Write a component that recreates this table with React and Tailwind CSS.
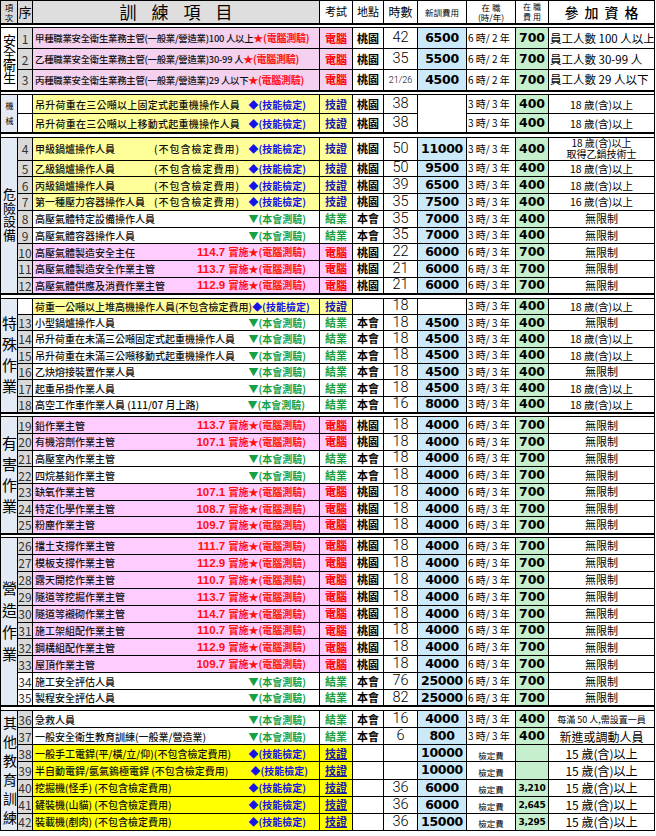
import React from "react";

const B = "border border-black";
const BP = "border border-black p-0";
const LAV = "bg-[#f3d1ef]";
const PINK = "bg-[#ffccff]";
const PY = "bg-[#ffff99]";
const BY = "bg-[#ffff00]";
const WH = "bg-white";
const VERT = "[writing-mode:vertical-rl] [text-orientation:upright] mx-auto";

const pc = (n, name, v, extra = {}) => ({
  n, name, tag: "pc", v, bg: PINK, ex: "電腦", pl: "桃園", hr: "18", fee: "4000",
  cy: "6 時/ 3 年", co: "700", q: "無限制", ...extra,
});
const club = (n, name, extra = {}) => ({
  n, name, tag: "club", bg: WH, ex: "結業", pl: "本會", hr: "18", fee: "4000",
  cy: "6 時/ 3 年", co: "700", q: "無限制", ...extra,
});
const skill = (n, name, extra = {}) => ({
  n, name, tag: "skill", bg: PY, ex: "技證", pl: "桃園", hr: "", fee: "",
  cy: "3 時/ 3 年", co: "400", q: "18 歲(含)以上", ...extra,
});

const sections = [
  {
    label: "安全衛生", lab: "text-[13px] tracking-[-0.5px] pt-[1px]", labBg: WH, h: "h-[21px]",
    rows: [
      pc(1, "甲種職業安全衛生業務主管(一般業/營造業)100 人以上", "", { inline: true, bg: LAV, hr: "42", fee: "6500", cy: "6 時/ 2 年", q: "員工人數 100 人以上", qc: "left" }),
      pc(2, "乙種職業安全衛生業務主管(一般業/營造業)30-99 人", "", { inline: true, bg: LAV, hr: "35", fee: "5500", cy: "6 時/ 2 年", q: "員工人數 30-99 人", qc: "left" }),
      pc(3, "丙種職業安全衛生業務主管(一般業/營造業)29 人以下", "", { inline: true, bg: LAV, hr: "21/26", fee: "4500", cy: "6 時/ 2 年", q: "員工人數 29 人以下", qc: "left" }),
    ],
  },
  {
    label: "機械", lab: "text-[8px] tracking-[7px] pt-[7px]", labBg: "bg-[#e4ebf5]", h: "h-[18px]",
    rows: [
      skill("", "吊升荷重在三公噸以上固定式起重機操作人員", { hr: "38", feeSpan: 2, nc: "tracking-[0.25px]" }),
      skill("", "吊升荷重在三公噸以上移動式起重機操作人員", { hr: "38", feeSkip: true, nc: "tracking-[0.25px]" }),
    ],
  },
  {
    label: "危險設備", lab: "text-[13px] tracking-[0.5px]", labBg: "bg-[#e4ebf5]", h: "h-[16.75px]",
    rows: [
      skill(4, "甲級鍋爐操作人員", { mid: true, hr: "50", fee: "11000", q: "18 歲(含)以上\n取得乙鍋技術士", h: "h-[23px]" }),
      skill(5, "乙級鍋爐操作人員", { mid: true, hr: "50", fee: "9500" }),
      skill(6, "丙級鍋爐操作人員", { mid: true, hr: "39", fee: "6500" }),
      skill(7, "第一種壓力容器操作人員", { mid: true, hr: "35", fee: "7500", q: "16 歲(含)以上" }),
      club(8, "高壓氣體特定設備操作人員", { hr: "35", fee: "7000", cy: "3 時/ 3 年", co: "400" }),
      club(9, "高壓氣體容器操作人員", { hr: "35", fee: "7000", cy: "3 時/ 3 年", co: "400" }),
      pc(10, "高壓氣體製造安全主任", "114.7", { hr: "22", fee: "6000" }),
      pc(11, "高壓氣體製造安全作業主管", "113.7", { hr: "21", fee: "6000" }),
      pc(12, "高壓氣體供應及消費作業主管", "112.9", { hr: "21", fee: "6000" }),
    ],
  },
  {
    label: "特殊作業", lab: "text-[15px] tracking-[6px] pt-[6px]", labBg: "bg-[#e4ebf5]", h: "h-[16.4px]",
    rows: [
      skill("", "荷重一公噸以上堆高機操作人員(不包含檢定費用)", { pl: "", hr: "18", pr: "pr-[11px]" }),
      club(13, "小型鍋爐操作人員", { fee: "4500", cy: "3 時/ 3 年", co: "400" }),
      club(14, "吊升荷重在未滿三公噸固定式起重機操作人員", { fee: "4500", cy: "3 時/ 3 年", co: "400", q: "18 歲(含)以上" }),
      club(15, "吊升荷重在未滿三公噸移動式起重機操作人員", { fee: "4500", cy: "3 時/ 3 年", co: "400", q: "18 歲(含)以上" }),
      club(16, "乙炔熔接裝置作業人員", { fee: "4500", cy: "3 時/ 3 年", co: "400" }),
      club(17, "起重吊掛作業人員", { fee: "4500", cy: "3 時/ 3 年", co: "400", q: "18 歲(含)以上" }),
      club(18, "高空工作車作業人員 (111/07 月上路)", { hr: "16", fee: "8000", cy: "3 時/ 3 年", co: "400", q: "18 歲(含)以上", pr: "pr-[14px]" }),
    ],
  },
  {
    label: "有害作業", lab: "text-[15px] tracking-[6px] pt-[6px]", labBg: "bg-[#e4ebf5]", h: "h-[16.7px]",
    rows: [
      pc(19, "鉛作業主管", "113.7"),
      pc(20, "有機溶劑作業主管", "107.1"),
      club(21, "高壓室內作業主管"),
      club(22, "四烷基鉛作業主管"),
      pc(23, "缺氧作業主管", "107.1"),
      pc(24, "特定化學作業主管", "108.7"),
      pc(25, "粉塵作業主管", "109.7"),
    ],
  },
  {
    label: "營造作業", lab: "text-[15px] tracking-[7px] pt-[7px]", labBg: "bg-[#e4ebf5]", h: "h-[16.9px]",
    rows: [
      pc(26, "擋土支撐作業主管", "111.7"),
      pc(27, "模板支撐作業主管", "112.9"),
      pc(28, "露天開挖作業主管", "110.7"),
      pc(29, "隧道等挖掘作業主管", "113.7"),
      pc(30, "隧道等襯砌作業主管", "114.7"),
      pc(31, "施工架組配作業主管", "110.7"),
      pc(32, "鋼構組配作業主管", "112.9"),
      pc(33, "屋頂作業主管", "109.7"),
      club(34, "施工安全評估人員", { hr: "76", fee: "25000", nbg: WH }),
      club(35, "製程安全評估人員", { hr: "82", fee: "25000", nbg: WH }),
    ],
  },
  {
    label: "其他教育訓練", lab: "text-[14px] tracking-[5px] pt-[5px]", labBg: "bg-[#e4ebf5]", h: "h-[17.1px]",
    rows: [
      club(36, "急救人員", { hr: "16", cy: "3 時/ 3 年", co: "400", q: "每滿 50 人,需設置一員", qc: "text-[9px]" }),
      club(37, "一般安全衛生教育訓練(一般業/營造業)", { hr: "6", fee: "800", cy: "3 時/ 3 年", co: "400", q: "新進或調動人員", qc: "text-[12px]" }),
      skill(38, "一般手工電銲(平/橫/立/仰)(不包含檢定費用)", { bg: BY, pl: "", fee: "10000", cy: "檢定費", co: "", q: "15 歲(含)以上", qc: "text-[12px]", u: true }),
      skill(39, "半自動電銲/氬氣鎢極電銲 (不包含檢定費用)", { bg: BY, pl: "", fee: "10000", cy: "檢定費", co: "", q: "15 歲(含)以上", qc: "text-[12px]", u: true, pr: "pr-[11px]" }),
      skill(40, "挖掘機(怪手) (不包含檢定費用)", { bg: BY, pl: "", hr: "36", fee: "6000", cy: "檢定費", co: "3,210", q: "15 歲(含)以上", qc: "text-[12px]", u: true }),
      skill(41, "鏟裝機(山貓) (不包含檢定費用)", { bg: BY, pl: "", hr: "36", fee: "6000", cy: "檢定費", co: "2,645", q: "15 歲(含)以上", qc: "text-[12px]", u: true }),
      skill(42, "裝載機(剷肉) (不包含檢定費用)", { bg: BY, pl: "", hr: "36", fee: "15000", cy: "檢定費", co: "3,295", q: "15 歲(含)以上", qc: "text-[12px]", u: true }),
    ],
  },
];

const EXC = {
  電腦: "text-[#ff0000]",
  技證: "text-[#1c1ca8]",
  結業: "text-[#14a044]",
};

function Tag({ r }) {
  if (r.tag === "pc")
    return (
      <span className="shrink-0 text-[#ff1010] font-bold text-[10px]">
        {r.v && <span className="font-['Liberation_Sans'] text-[11.5px]">{r.v} </span>}
        {r.v && "實施"}★(電腦測驗)
      </span>
    );
  if (r.tag === "skill") return <span className="shrink-0 text-[#1414e6] font-bold text-[10px]">◆(技能檢定)</span>;
  return <span className="shrink-0 text-[#14a044] font-bold text-[10px]">▼(本會測驗)</span>;
}

function Item({ r }) {
  if (r.inline)
    return (
      <td className={`${B} ${r.bg} py-0 px-[2px]`}>
        <div className="whitespace-nowrap text-[9.4px] leading-[13px] tracking-[-0.25px] text-[#111] font-medium">
          {r.name}
          <Tag r={r} />
        </div>
      </td>
    );
  return (
    <td className={`${B} ${r.bg} py-0 pl-[2px] ${r.pr || "pr-[13px]"}`}>
      <div className="flex items-center whitespace-nowrap text-[10px] leading-[13px] text-[#111] font-medium">
        <span className={`${r.mid ? "w-[119px] shrink-0" : ""} ${r.nc || ""}`}>{r.name}</span>
        {r.mid && <span className="tracking-[1px]">(不包含檢定費用)</span>}
        <span className="flex-1" />
        <Tag r={r} />
      </div>
    </td>
  );
}

function Qual({ r }) {
  if (r.q.includes("\n"))
    return <td className={`${BP} text-center text-[10px] leading-[10.5px] whitespace-pre-line`}>{r.q}</td>;
  let cls = "text-center text-[10.5px]";
  if (r.qc === "left") cls = "text-left pl-[1px] text-[11.5px]";
  else if (r.qc) cls = `text-center ${r.qc}`;
  else if (r.q === "無限制") cls = "text-center text-[11px]";
  return <td className={`${BP} ${cls} whitespace-nowrap leading-[13px]`}>{r.q}</td>;
}

function Row({ r, first, sec }) {
  return (
    <tr className={r.h || sec.h}>
      {first && (
        <td rowSpan={sec.rows.length} className={`${BP} ${sec.labBg}`}>
          <div className={`${VERT} ${sec.lab} leading-[17px]`}>{sec.label}</div>
        </td>
      )}
      <td className={`${BP} ${r.n === "" ? WH : r.nbg || "bg-[#d9d9d9]"} text-center text-[12px] leading-[13px] text-[#333]`}>{r.n}</td>
      <Item r={r} />
      <td className={`${BP} ${r.bg} text-center text-[11px] font-bold leading-[13px] ${EXC[r.ex]} ${r.u ? "underline" : ""}`}>{r.ex}</td>
      <td className={`${BP} bg-white text-center text-[11px] font-bold leading-[13px]`}>{r.pl}</td>
      <td className={`${BP} bg-white text-center leading-[14px] font-['Roboto'] font-light ${r.hr.length > 3 ? "text-[9px]" : "text-[14.5px]"}`}>{r.hr}</td>
      {!r.feeSkip && (
        <td
          rowSpan={r.feeSpan || 1}
          className={`${BP} ${r.fee ? "bg-[#cce9f9]" : "bg-white"} text-center font-['DejaVu_Sans'] font-bold text-[12.5px] leading-[14px] tracking-[-0.3px]`}
        >
          {r.fee}
        </td>
      )}
      <td className={`${BP} bg-white leading-[12px] whitespace-nowrap ${r.cy === "檢定費" ? "text-center text-[8.5px] pt-[3px]" : "text-left pl-[1px] text-[10px]"}`}>{r.cy}</td>
      <td className={`${BP} bg-[#c6efce] text-center font-['DejaVu_Sans'] font-bold leading-[14px] ${r.co.length > 3 ? "text-[9px] tracking-[-0.3px]" : "text-[12.5px]"}`}>{r.co}</td>
      <Qual r={r} />
    </tr>
  );
}

function Sep() {
  return (
    <tr className="h-[4px]">
      <td colSpan={10} className="p-0 border-t-2 border-b border-x border-black bg-white" />
    </tr>
  );
}

export default function App() {
  return (
    <div className="w-[656px] h-[836px] bg-white font-['Noto_Sans_CJK_TC',sans-serif] text-black overflow-hidden">
      <table className="table-fixed border-collapse w-[654px]">
        <colgroup>
          <col className="w-[17px]" />
          <col className="w-[15px]" />
          <col className="w-[287px]" />
          <col className="w-[33px]" />
          <col className="w-[31px]" />
          <col className="w-[34px]" />
          <col className="w-[49px]" />
          <col className="w-[49px]" />
          <col className="w-[33px]" />
          <col className="w-[106px]" />
        </colgroup>
        <thead>
          <tr className="h-[23px]">
            <th className={`${BP} bg-[#d9d9d9] font-normal`}>
              <div className="text-[8.5px] leading-[10px] whitespace-pre-line">{"項\n次"}</div>
            </th>
            <th className={`${BP} bg-[#d9d9d9] font-normal text-[13px] leading-[15px]`}>序</th>
            <th className={`${BP} bg-[#dedede] font-normal text-[17px] leading-[19px] tracking-[15px] pl-[15px]`}>訓練項目</th>
            <th className={`${BP} bg-white font-normal text-[11px] leading-[13px]`}>考試</th>
            <th className={`${BP} bg-white font-normal text-[11px] leading-[13px]`}>地點</th>
            <th className={`${BP} bg-white font-normal text-[12px] leading-[14px]`}>時數</th>
            <th className={`${BP} bg-white font-normal text-[8.5px] leading-[10px]`}>新訓費用</th>
            <th className={`${BP} bg-white font-normal text-[8.5px] leading-[10px] whitespace-pre-line`}>{"在 職\n(時/年)"}</th>
            <th className={`${BP} bg-white font-normal text-[8px] leading-[10px] whitespace-pre-line`}>{"在 職\n費 用"}</th>
            <th className={`${BP} bg-white font-medium text-[14px] leading-[16px] tracking-[6px] pl-[6px]`}>參加資格</th>
          </tr>
        </thead>
        <tbody>
          {sections.map((sec, si) => (
            <React.Fragment key={si}>
              <Sep />
              {sec.rows.map((r, ri) => (
                <Row key={ri} r={r} first={ri === 0} sec={sec} />
              ))}
            </React.Fragment>
          ))}
        </tbody>
      </table>
    </div>
  );
}
